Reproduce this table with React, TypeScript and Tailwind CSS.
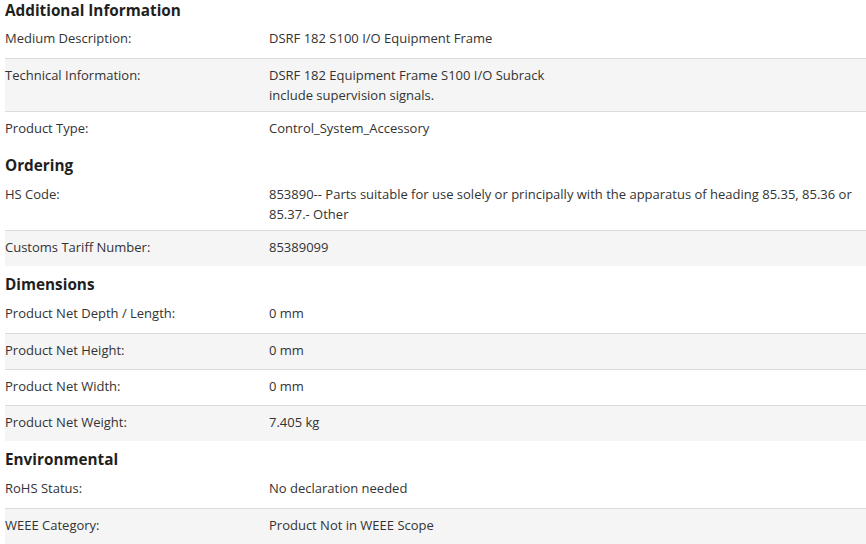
import React from "react";

type Row = { label: string; value: string[] };
type Section = { title: string; rows: Row[] };

const sections: Section[] = [
  {
    title: "Additional Information",
    rows: [
      { label: "Medium Description:", value: ["DSRF 182 S100 I/O Equipment Frame"] },
      {
        label: "Technical Information:",
        value: ["DSRF 182 Equipment Frame S100 I/O Subrack", "include supervision signals."],
      },
      { label: "Product Type:", value: ["Control_System_Accessory"] },
    ],
  },
  {
    title: "Ordering",
    rows: [
      {
        label: "HS Code:",
        value: [
          "853890-- Parts suitable for use solely or principally with the apparatus of heading 85.35, 85.36 or",
          "85.37.- Other",
        ],
      },
      { label: "Customs Tariff Number:", value: ["85389099"] },
    ],
  },
  {
    title: "Dimensions",
    rows: [
      { label: "Product Net Depth / Length:", value: ["0 mm"] },
      { label: "Product Net Height:", value: ["0 mm"] },
      { label: "Product Net Width:", value: ["0 mm"] },
      { label: "Product Net Weight:", value: ["7.405 kg"] },
    ],
  },
  {
    title: "Environmental",
    rows: [
      { label: "RoHS Status:", value: ["No declaration needed"] },
      { label: "WEEE Category:", value: ["Product Not in WEEE Scope"] },
    ],
  },
];

export default function App() {
  return (
    <div
      className="w-[866px] h-[544px] overflow-hidden bg-white pl-[5px] text-[#333333]"
      style={{ fontFamily: '"Open Sans", "Liberation Sans", sans-serif' }}
    >
      {sections.map((s, si) => (
        <div key={s.title}>
          <h2
            className={`${si === 0 ? "h-[22px] pb-[2px]" : "h-[31px] pt-[8px] pb-[3px]"} text-[15.3px] font-bold leading-[20px] text-[#1f1f1f]`}
          >
            {s.title}
          </h2>
          {s.rows.map((r, ri) => (
            <div
              key={r.label}
              className={`flex min-h-[36px] items-start py-[6px] text-[13px] leading-[20px] ${
                ri % 2 === 1 ? "bg-[#f5f5f5]" : "bg-white"
              } ${ri > 0 ? "border-t border-[#dcdcdc]" : ""}`}
            >
              <div className="w-[264px] shrink-0">{r.label}</div>
              <div className="flex-1">
                {r.value.map((v, vi) => (
                  <div key={vi} className="whitespace-nowrap">
                    {v}
                  </div>
                ))}
              </div>
            </div>
          ))}
        </div>
      ))}
    </div>
  );
}
